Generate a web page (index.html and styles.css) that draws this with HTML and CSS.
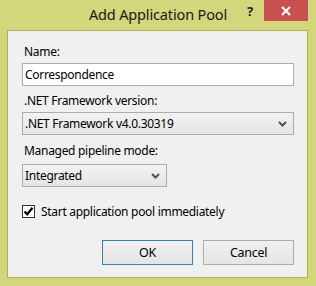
FILE: index.html
```html
<!DOCTYPE html>
<html lang="en">
<head>
    <meta charset="UTF-8">
    <title>Add Application Pool</title>
    <link rel="stylesheet" href="styles.css">
</head>
<body>

    <div class="window">
        <!-- Title bar -->
        <div class="titlebar">
            <span class="title">Add Application Pool</span>
            <span class="help">?</span>
            <span class="close">
                <svg width="10" height="10" viewBox="0 0 10 10">
                    <path d="M1 1 L9 9 M9 1 L1 9" stroke="#fff" stroke-width="2" fill="none"/>
                </svg>
            </span>
        </div>

        <!-- Dialog body -->
        <div class="client">
            <div class="field-label label-name">Name:</div>
            <div class="textbox">Correspondence</div>

            <div class="field-label label-gap">.NET Framework version:</div>
            <div class="combo combo-wide">
                <span>.NET Framework v4.0.30319</span>
                <svg class="chevron" width="9" height="6" viewBox="0 0 9 6">
                    <path d="M1 1 L4.5 4.5 L8 1" stroke="#505050" stroke-width="2" fill="none"/>
                </svg>
            </div>

            <div class="field-label label-gap2">Managed pipeline mode:</div>
            <div class="combo combo-narrow">
                <span>Integrated</span>
                <svg class="chevron" width="9" height="6" viewBox="0 0 9 6">
                    <path d="M1 1 L4.5 4.5 L8 1" stroke="#505050" stroke-width="2" fill="none"/>
                </svg>
            </div>

            <div class="check-row">
                <span class="checkbox">
                    <svg width="11" height="11" viewBox="0 0 11 11">
                        <path d="M1.5 5.5 L4.2 8.3 L9.5 1.8" stroke="#000" stroke-width="2.2" fill="none"/>
                    </svg>
                </span>
                <span>Start application pool immediately</span>
            </div>

            <div class="buttons">
                <div class="button default">OK</div>
                <div class="button">Cancel</div>
            </div>
        </div>
    </div>

</body>
</html>
```

FILE: styles.css
```css
/* Page */
body {
    margin: 0;
    font-family: "Noto Sans", "Open Sans", sans-serif;
    color: #000;
}

/* Window frame */
.window {
    width: 316px;
    height: 286px;
    background: #d3d67a;
    display: flex;
    flex-direction: column;
}

/* Title bar */
.titlebar {
    height: 30px;
    display: flex;
    align-items: flex-start;
    padding-left: 78px;
    padding-right: 8px;
    box-sizing: border-box;
}

.title {
    flex: 1;
    text-align: center;
    font-size: 14.5px;
    letter-spacing: -0.15px;
    line-height: 29px;
    color: #1a1a1a;
}

.help {
    width: 24px;
    margin-right: 2px;
    text-align: center;
    font-weight: bold;
    font-size: 13px;
    line-height: 22px;
    color: #222;
}

.close {
    width: 44px;
    height: 21px;
    background: #c75050;
    display: flex;
    align-items: center;
    justify-content: center;
}

/* Client area */
.client {
    flex: 1;
    margin: 0 8px 8px 7px;
    border: 1px solid #acb05a;
    background: #f0f0f0;
    padding: 13px 13px 0 14px;
    font-size: 12px;
    letter-spacing: -0.3px;
}

.field-label {
    line-height: 15px;
    padding-left: 2px;
    margin-bottom: 4px;
}

.label-gap {
    margin-top: 7px;
}

.label-gap2 {
    margin-top: 8px;
    margin-bottom: 6px;
}

/* Text box */
.textbox {
    height: 23px;
    box-sizing: border-box;
    border: 1px solid #abadb3;
    background: #fff;
    padding-left: 2px;
    line-height: 21px;
}

/* Drop-down */
.combo {
    height: 23px;
    box-sizing: border-box;
    border: 1px solid #acacac;
    background: linear-gradient(#f2f2f2, #e5e5e5);
    display: flex;
    align-items: center;
    justify-content: space-between;
    padding: 0 6px 0 2px;
}

.combo-narrow {
    width: 145px;
}

.chevron {
    margin-top: 1px;
}

/* Checkbox */
.check-row {
    margin-top: 17px;
    display: flex;
    align-items: center;
    gap: 6px;
    line-height: 15px;
}

.checkbox {
    width: 13px;
    height: 13px;
    box-sizing: border-box;
    border: 1px solid #333;
    background: #fff;
    display: flex;
    align-items: center;
    justify-content: center;
}

/* Buttons */
.buttons {
    margin-top: 21px;
    display: flex;
    justify-content: flex-end;
    gap: 10px;
}

.button {
    width: 91px;
    height: 25px;
    box-sizing: border-box;
    border: 1px solid #acacac;
    background: linear-gradient(#f0f0f0, #e5e5e5);
    text-align: center;
    line-height: 23px;
    font-size: 12.5px;
}

.button.default {
    border-color: #3c7fb1;
}
```
